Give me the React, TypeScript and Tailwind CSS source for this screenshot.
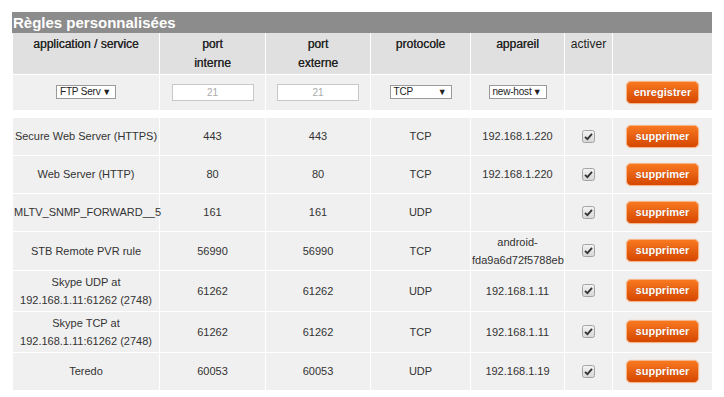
import React from 'react';

type Rule = {
  name: string[];
  pin: string;
  pex: string;
  proto: string;
  host: string[];
};

const rules: Rule[] = [
  { name: ['Secure Web Server (HTTPS)'], pin: '443', pex: '443', proto: 'TCP', host: ['192.168.1.220'] },
  { name: ['Web Server (HTTP)'], pin: '80', pex: '80', proto: 'TCP', host: ['192.168.1.220'] },
  { name: ['MLTV_SNMP_FORWARD__5'], pin: '161', pex: '161', proto: 'UDP', host: [] },
  { name: ['STB Remote PVR rule'], pin: '56990', pex: '56990', proto: 'TCP', host: ['android-', 'fda9a6d72f5788eb'] },
  { name: ['Skype UDP at', '192.168.1.11:61262 (2748)'], pin: '61262', pex: '61262', proto: 'UDP', host: ['192.168.1.11'] },
  { name: ['Skype TCP at', '192.168.1.11:61262 (2748)'], pin: '61262', pex: '61262', proto: 'TCP', host: ['192.168.1.11'] },
  { name: ['Teredo'], pin: '60053', pex: '60053', proto: 'UDP', host: ['192.168.1.19'] },
];

const OrangeButton: React.FC<{ label: string }> = ({ label }) => (
  <button className="w-[73px] h-[23px] rounded-[5px] border border-[#f7b58a] bg-gradient-to-b from-[#f8781f] to-[#d54700] text-white text-[11px] font-bold leading-none shadow-[0_0_1px_#e9a070] [text-shadow:0_0_1px_#b43a00]">
    {label}
  </button>
);

const FakeSelect: React.FC<{ label: string; w: string }> = ({ label, w }) => (
  <div className={`mx-auto ${w} h-[14px] bg-white border border-[#9a9a9a] flex items-center justify-between pl-[3px] pr-[4px] text-[10px] tracking-[-0.2px] text-[#222] leading-none`}>
    <span>{label}</span>
    <span className="text-[9px]">▼</span>
  </div>
);

const FakeInput: React.FC = () => (
  <div className="mx-auto w-[82px] h-[17px] bg-white border border-[#c8c8c8] flex items-center justify-center text-[10px] text-[#aaa]">
    21
  </div>
);

const Check: React.FC = () => (
  <svg width="13" height="13" viewBox="0 0 13 13" className="mx-auto block">
    <defs>
      <linearGradient id="cb" x1="0" y1="0" x2="0" y2="1">
        <stop offset="0" stopColor="#f4f4f4" />
        <stop offset="1" stopColor="#d6d6d6" />
      </linearGradient>
    </defs>
    <rect x="0.5" y="0.5" width="12" height="12" rx="2" fill="url(#cb)" stroke="#a4a4a4" />
    <path d="M3 6.8 L5.4 9.2 L10 3.8" fill="none" stroke="#333" strokeWidth="1.8" />
  </svg>
);

const App: React.FC = () => {
  const td = 'border border-white text-center align-middle px-[1px] py-[1px]';
  const th = 'border border-white text-center align-top px-[1px] pt-[2px] leading-[19px] text-[12px] font-normal text-[#222] [text-shadow:0.3px_0_0_#444]';

  return (
    <div className="w-[724px] h-[397px] bg-white pt-[12px] pl-[12px] font-['Liberation_Sans',Arial,sans-serif] text-[#333]">
      <div className="w-[700px] h-[21px] bg-[#8c8c8c] text-white text-[15px] font-bold leading-[21px] pl-[1px]">
        Règles personnalisées
      </div>
      <table className="w-[700px] table-fixed border-collapse text-[11px]">
        <colgroup>
          <col className="w-[147px]" />
          <col className="w-[106px]" />
          <col className="w-[105px]" />
          <col className="w-[100px]" />
          <col className="w-[94px]" />
          <col className="w-[48px]" />
          <col className="w-[100px]" />
        </colgroup>
        <thead>
          <tr className="bg-[#e0e0e0] h-[41px]">
            <th className={`${th} border-t-0`}>application / service</th>
            <th className={`${th} border-t-0`}>port<br />interne</th>
            <th className={`${th} border-t-0`}>port<br />externe</th>
            <th className={`${th} border-t-0`}>protocole</th>
            <th className={`${th} border-t-0`}>appareil</th>
            <th className={`${th} border-t-0 text-[11px] [text-shadow:none]`}>activer</th>
            <th className={`${th} border-t-0`}></th>
          </tr>
        </thead>
        <tbody>
          <tr className="bg-[#f0f0f0] h-[36px]">
            <td className={td}><FakeSelect label="FTP Serv" w="w-[60px]" /></td>
            <td className={td}><FakeInput /></td>
            <td className={td}><FakeInput /></td>
            <td className={td}><FakeSelect label="TCP" w="w-[62px]" /></td>
            <td className={td}><FakeSelect label="new-host" w="w-[58px]" /></td>
            <td className={td}></td>
            <td className={td}><OrangeButton label="enregistrer" /></td>
          </tr>
          <tr className="h-[7px]">
            <td colSpan={7} className="p-0"></td>
          </tr>
          {rules.map((r, i) => (
            <tr key={i} className="bg-[#f0f0f0] h-[38px] leading-[18px]">
              <td className={`${td} whitespace-nowrap ${r.name.length > 1 ? 'py-[2px]' : ''}`}>
                {r.name.map((n, j) => (
                  <div key={j}>{n}</div>
                ))}
              </td>
              <td className={td}>{r.pin}</td>
              <td className={td}>{r.pex}</td>
              <td className={td}>{r.proto}</td>
              <td className={td}>
                {r.host.map((h, j) => (
                  <div key={j}>{h}</div>
                ))}
              </td>
              <td className={td}><Check /></td>
              <td className={td}><OrangeButton label="supprimer" /></td>
            </tr>
          ))}
        </tbody>
      </table>
    </div>
  );
};

export default App;
